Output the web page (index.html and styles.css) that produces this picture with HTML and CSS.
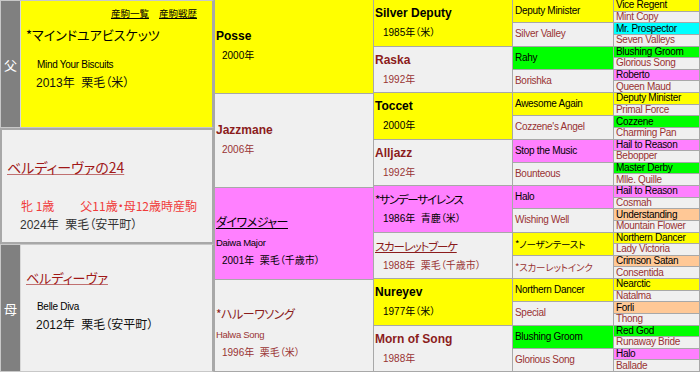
FILE: index.html
```html
<!DOCTYPE html>
<html lang="ja">
<head>
<meta charset="utf-8">
<title>血統表</title>
<link rel="stylesheet" href="styles.css">
</head>
<body>
<div class="pedigree">
  <div class="col col0">
    <div class="parent sire">
      <div class="side">父</div>
      <div class="pbox y">
        <div class="links"><a href="#">産駒一覧</a><a href="#">産駒戦歴</a></div>
        <div class="pname m">*マインドユアビスケッツ</div>
        <div class="pen">Mind Your Biscuits</div>
        <div class="pinfo">2013年&nbsp;&nbsp;栗毛（米）</div>
      </div>
    </div>
    <div class="self">
      <a class="sname" href="#">ベルディーヴァの24</a>
      <div class="sage">牝&nbsp;1歳<span class="sgap"></span>父11歳・母12歳時産駒</div>
      <div class="sinfo">2024年&nbsp;&nbsp;栗毛（安平町）</div>
    </div>
    <div class="parent dam">
      <div class="side">母</div>
      <div class="pbox">
        <a class="pname f" href="#">ベルディーヴァ</a>
        <div class="pen">Belle Diva</div>
        <div class="pinfo">2012年&nbsp;&nbsp;栗毛（安平町）</div>
      </div>
    </div>
  </div>

  <div class="col col1">
    <div class="cell y c1"><div class="n m">Posse</div><div class="yr">2000年</div></div>
    <div class="cell c1"><div class="n f">Jazzmane</div><div class="yr f">2006年</div></div>
    <div class="cell p c1 three"><a class="n jp m" href="#">ダイワメジャー</a><div class="en">Daiwa Major</div><div class="yr">2001年&nbsp;&nbsp;栗毛（千歳市）</div></div>
    <div class="cell c1 three"><div class="n jp f">*ハルーワソング</div><div class="en f">Halwa Song</div><div class="yr f">1996年&nbsp;&nbsp;栗毛（米）</div></div>
  </div>

  <div class="col col2">
    <div class="cell y c2"><div class="n m">Silver Deputy</div><div class="yr">1985年（米）</div></div>
    <div class="cell c2"><div class="n f">Raska</div><div class="yr f">1992年</div></div>
    <div class="cell y c2"><div class="n m">Toccet</div><div class="yr">2000年</div></div>
    <div class="cell c2"><div class="n f">Alljazz</div><div class="yr f">1992年</div></div>
    <div class="cell p c2"><div class="n jp m">*サンデーサイレンス</div><div class="yr">1986年&nbsp;&nbsp;青鹿（米）</div></div>
    <div class="cell c2"><a class="n jp f" href="#">スカーレットブーケ</a><div class="yr f">1988年&nbsp;&nbsp;栗毛（千歳市）</div></div>
    <div class="cell y c2"><div class="n m">Nureyev</div><div class="yr">1977年（米）</div></div>
    <div class="cell c2"><div class="n f">Morn of Song</div><div class="yr f">1988年</div></div>
  </div>

  <div class="col col3">
    <div class="cell y c3">Deputy Minister</div>
    <div class="cell c3 f">Silver Valley</div>
    <div class="cell g c3">Rahy</div>
    <div class="cell c3 f">Borishka</div>
    <div class="cell y c3">Awesome Again</div>
    <div class="cell c3 f">Cozzene's Angel</div>
    <div class="cell p c3">Stop the Music</div>
    <div class="cell c3 f">Bounteous</div>
    <div class="cell p c3">Halo</div>
    <div class="cell c3 f">Wishing Well</div>
    <div class="cell y c3 jp">*ノーザンテースト</div>
    <div class="cell c3 f jp">*スカーレットインク</div>
    <div class="cell y c3">Northern Dancer</div>
    <div class="cell c3 f">Special</div>
    <div class="cell g c3">Blushing Groom</div>
    <div class="cell c3 f">Glorious Song</div>
  </div>

  <div class="col col4">
    <div class="cell y c4">Vice Regent</div>
    <div class="cell c4 f">Mint Copy</div>
    <div class="cell c c4">Mr. Prospector</div>
    <div class="cell c4 f">Seven Valleys</div>
    <div class="cell g c4">Blushing Groom</div>
    <div class="cell c4 f">Glorious Song</div>
    <div class="cell p c4">Roberto</div>
    <div class="cell c4 f">Queen Maud</div>
    <div class="cell y c4">Deputy Minister</div>
    <div class="cell c4 f">Primal Force</div>
    <div class="cell g c4">Cozzene</div>
    <div class="cell c4 f">Charming Pan</div>
    <div class="cell p c4">Hail to Reason</div>
    <div class="cell c4 f">Bebopper</div>
    <div class="cell g c4">Master Derby</div>
    <div class="cell c4 f">Mlle. Quille</div>
    <div class="cell p c4">Hail to Reason</div>
    <div class="cell c4 f">Cosmah</div>
    <div class="cell o c4">Understanding</div>
    <div class="cell c4 f">Mountain Flower</div>
    <div class="cell y c4">Northern Dancer</div>
    <div class="cell c4 f">Lady Victoria</div>
    <div class="cell o c4">Crimson Satan</div>
    <div class="cell c4 f">Consentida</div>
    <div class="cell y c4">Nearctic</div>
    <div class="cell c4 f">Natalma</div>
    <div class="cell o c4">Forli</div>
    <div class="cell c4 f">Thong</div>
    <div class="cell g c4">Red God</div>
    <div class="cell c4 f">Runaway Bride</div>
    <div class="cell p c4">Halo</div>
    <div class="cell c4 f">Ballade</div>
  </div>
</div>
</body>
</html>
```
FILE: styles.css
```css
* { box-sizing: border-box; }
html, body { margin: 0; padding: 0; background: #f0f0f0; }
body {
  font-family: "Liberation Sans", "Noto Sans CJK JP", sans-serif;
  color: #000;
  font-feature-settings: "palt";
}
a { color: inherit; }

.pedigree {
  display: flex;
  width: 700px;
  height: 372px;
  background: #f0f0f0;
}
.col { display: flex; flex-direction: column; height: 372px; }
.col0 { width: 214px; }
.col1 { width: 160px; }
.col2 { width: 139px; }
.col3 { width: 101px; }
.col4 { width: 86px; }

.cell {
  flex: 1 1 0;
  min-height: 0;
  background: #f0f0f0;
  border-right: 1px solid #a8a8a8;
  border-bottom: 1px solid #a8a8a8;
  overflow: hidden;
}
.col1 .cell { border-left: 1px solid #a8a8a8; }

.y { background: #ffff00; }
.p { background: #ff80ff; }
.g { background: #00ff00; }
.c { background: #00ffff; }
.o { background: #ffc896; }
.f { color: #993333; }
.m { color: #000; }

/* left column */
.parent {
  height: 128px;
  display: flex;
  border: 1px solid #c8c8c8;
  border-right: 2px solid #a8a8a8;
}
.side {
  width: 20px;
  background: #808080;
  color: #fff;
  font-family: "Noto Sans CJK JP", sans-serif;
  font-size: 13px;
  display: flex;
  align-items: center;
  justify-content: center;
  border-right: 1px solid #d8d8d8;
}
.pbox {
  flex: 1;
  background: #f0f0f0;
  padding: 0 0 0 5px;
  display: flex;
  flex-direction: column;
}
.pbox.y { background: #ffff00; }
.links {
  display: flex;
  justify-content: flex-end;
  gap: 10px;
  padding: 5px 15px 0 0;
  font-family: "Noto Sans CJK JP", sans-serif;
  font-size: 9.5px;
  line-height: 15px;
  height: 20px;
}
.links a { color: #000; }
.pname {
  font-family: "Noto Sans CJK JP", sans-serif;
  font-size: 13px;
  line-height: 20px;
}
.sire .pname { margin-top: 4px; }
.dam .pname {
  margin-top: 23px;
  align-self: flex-start;
  text-decoration-color: #c07070;
  color: #a01818;
}
.pen {
  font-size: 10px;
  letter-spacing: -0.3px;
  line-height: 14px;
  padding-left: 11px;
  margin-top: 13px;
}
.dam .pen { margin-top: 12px; }
.pinfo {
  font-size: 12px;
  line-height: 18px;
  padding-left: 10px;
  margin-top: 2px;
  color: #111;
}

.self {
  height: 116px;
  border: 2px solid #a8a8a8;
  background: #f0f0f0;
  display: flex;
  flex-direction: column;
  padding-left: 5px;
}
.sname {
  margin-top: 27px;
  align-self: flex-start;
  font-family: "Noto Sans CJK JP", sans-serif;
  font-size: 14px;
  line-height: 20px;
  color: #a01818;
  text-decoration-color: #c07070;
}
.sage {
  margin-top: 21px;
  padding-left: 14px;
  font-family: "Noto Sans CJK JP", sans-serif;
  font-size: 12px;
  line-height: 16px;
  color: #f03a3a;
}
.sgap { display: inline-block; width: 26px; }
.sinfo {
  margin-top: 2px;
  padding-left: 13px;
  font-size: 12px;
  line-height: 18px;
  color: #333;
}

/* generation cells */
.c1, .c2 {
  display: flex;
  flex-direction: column;
  justify-content: flex-start;
  padding-left: 1px;
}
.c1 { padding-top: 27px; }
.c2 { padding-top: 4px; }
.n {
  font-weight: bold;
  font-size: 12px;
  line-height: 18px;
  align-self: flex-start;
}
.n.jp {
  font-family: "Noto Sans CJK JP", sans-serif;
  font-weight: normal;
  font-size: 11.5px;
  letter-spacing: -1.2px;
}
.c1 .n.jp { font-size: 12px; letter-spacing: -0.5px; }
.n.f { color: #8b1c1c; }
.yr {
  font-size: 10px;
  line-height: 14px;
  margin-top: 4px;
  padding-left: 8px;
}
.c1 .yr { padding-left: 6px; }
.c1.three { padding-top: 25px; }
.three .en { font-size: 9.5px; letter-spacing: -0.3px; line-height: 14px; margin-top: 5px; }
.three .yr { margin-top: 4px; }

.c3 {
  font-size: 10px;
  letter-spacing: -0.3px;
  line-height: 12px;
  display: flex;
  align-items: center;
  padding-left: 2px;
  white-space: nowrap;
}
.c3.jp { font-family: "Noto Sans CJK JP", sans-serif; font-size: 9.5px; letter-spacing: -0.2px; }
.c4 {
  font-size: 10px;
  letter-spacing: -0.3px;
  line-height: 10px;
  display: flex;
  align-items: center;
  padding-left: 2px;
  white-space: nowrap;
}
```
